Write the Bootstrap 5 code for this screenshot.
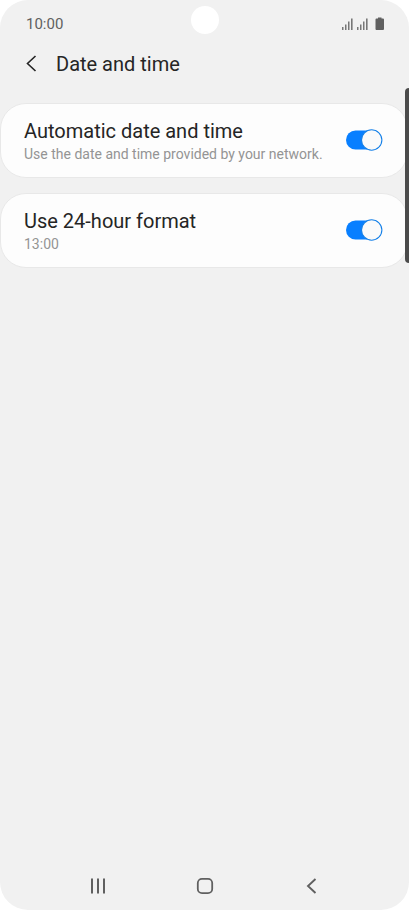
<!DOCTYPE html>
<html lang="en">
<head>
<meta charset="utf-8">
<meta name="viewport" content="width=device-width, initial-scale=1">
<title>Date and time</title>
<link href="https://cdn.jsdelivr.net/npm/bootstrap@5.3.0/dist/css/bootstrap.min.css" rel="stylesheet">
<style>
body { background: #fff; font-family: Roboto, "Liberation Sans", sans-serif; color: #252525; }
.phone { background: #f1f1f1; border-radius: 28px; }
.status-bar { height: 40px; padding: 8px 24px 0 26px; color: #606060; font-size: 15px; line-height: 33px; }
.camera { width: 28px; height: 28px; top: 6px; }
.title-bar { height: 48px; padding-left: 24px; gap: 16px; }
.title-bar h1 { font-size: 20px; line-height: 28px; }
.back-link { width: 16px; }
.settings { padding: 15px 1px 0 0; gap: 15px; }
.setting { background: #fdfdfd; border: 1px solid #e8e8e8; border-radius: 26px; padding: 12px 24px 13px 23px; }
.setting label { padding-top: 1px; }
.setting-name { font-size: 20px; line-height: 28px; }
.setting-note { font-size: 14px; line-height: 19px; color: #949494; }
.setting .form-check-input {
  width: 38px; height: 22px; border: 0; border-radius: 11px; background-color: transparent;
  background-size: 38px 22px; background-position: center;
  background-image: url("data:image/svg+xml,%3Csvg xmlns='http://www.w3.org/2000/svg' viewBox='0 0 38 22'%3E%3Crect x='1' y='1.5' width='34' height='19' rx='9.5' fill='%23aaa'/%3E%3Ccircle cx='11' cy='11' r='10.3' fill='%23fafafa' stroke='%23999'/%3E%3C/svg%3E");
}
.setting .form-check-input:checked {
  background-color: transparent;
  background-image: url("data:image/svg+xml,%3Csvg xmlns='http://www.w3.org/2000/svg' viewBox='0 0 38 22'%3E%3Crect x='1' y='1.5' width='34' height='19' rx='9.5' fill='%23087fff'/%3E%3Ccircle cx='26.7' cy='11' r='10.2' fill='%23fafafa' stroke='%231480e8' stroke-width='1.1'/%3E%3C/svg%3E");
}
.edge-handle { width: 4px; height: 175px; top: 88px; background: #4b4b4b; border-radius: 4px 0 0 4px; }
.nav-keys { height: 48px; padding: 0 44px 0 45px; color: #606060; }
</style>
</head>
<body>
<div class="phone position-relative overflow-hidden min-vh-100 d-flex flex-column">
  <div class="status-bar d-flex justify-content-between">
    <span>10:00</span>
    <svg width="43" height="14" viewBox="0 0 43 14" fill="#606060" class="mt-2" role="img" aria-label="Signal and battery">
      <path fill="#777" d="M0 11h1.500v3H0zM3 8.500h1.500V14H3zM6 5.500h1.500V14H6zM9 2.500h1.600V14H9zM15 11h1.500v3H15zM18 8.500h1.500V14H18zM21 5.500h1.500V14H21zM24 2.500h1.600V14H24z"/>
      <path d="M36 1.500h3.500v1H41q1 0 1 1V13q0 1-1 1h-6.500q-1 0-1-1V3.500q0-1 1-1H36z"/>
    </svg>
  </div>
  <div class="camera position-absolute start-50 translate-middle-x rounded-circle bg-white"></div>
  <header class="title-bar d-flex align-items-center">
    <a href="#" class="back-link d-flex" aria-label="Back">
      <svg width="16" height="18" viewBox="0 0 16 18" fill="none" stroke="#252525" stroke-width="1.600"><path d="M11.500 1 3.500 8.500l8 7.500"/></svg>
    </a>
    <h1 class="m-0 fw-normal">Date and time</h1>
  </header>
  <main class="settings d-flex flex-column flex-grow-1">
    <div class="setting d-flex align-items-center justify-content-between">
      <label for="auto-time">
        <span class="setting-name d-block">Automatic date and time</span>
        <span class="setting-note d-block">Use the date and time provided by your network.</span>
      </label>
      <input class="form-check-input flex-shrink-0 m-0" type="checkbox" role="switch" id="auto-time" checked>
    </div>
    <div class="setting d-flex align-items-center justify-content-between">
      <label for="format-24">
        <span class="setting-name d-block">Use 24-hour format</span>
        <span class="setting-note d-block">13:00</span>
      </label>
      <input class="form-check-input flex-shrink-0 m-0" type="checkbox" role="switch" id="format-24" checked>
    </div>
  </main>
  <div class="edge-handle position-absolute end-0"></div>
  <nav class="nav-keys d-flex align-items-center" aria-label="System">
    <button class="btn border-0 p-0 d-flex flex-fill justify-content-center" type="button" aria-label="Recent apps">
      <svg width="18" height="18" viewBox="0 0 18 18" fill="#606060"><path d="M2 1.500h2v15H2zM8 1.500h2v15H8zM14 1.500h2v15h-2z"/></svg>
    </button>
    <button class="btn border-0 p-0 d-flex flex-fill justify-content-center" type="button" aria-label="Home">
      <svg width="18" height="18" viewBox="0 0 18 18" fill="none" stroke="#606060" stroke-width="1.800"><rect x="1.800" y="1.800" width="14.400" height="14.400" rx="4.200"/></svg>
    </button>
    <button class="btn border-0 p-0 d-flex flex-fill justify-content-center" type="button" aria-label="Previous">
      <svg width="18" height="18" viewBox="0 0 18 18" fill="none" stroke="#606060" stroke-width="1.900"><path d="M12.500 2 5 9l7.500 7"/></svg>
    </button>
  </nav>
</div>
<script src="https://cdn.jsdelivr.net/npm/bootstrap@5.3.0/dist/js/bootstrap.bundle.min.js"></script>
</body>
</html>
